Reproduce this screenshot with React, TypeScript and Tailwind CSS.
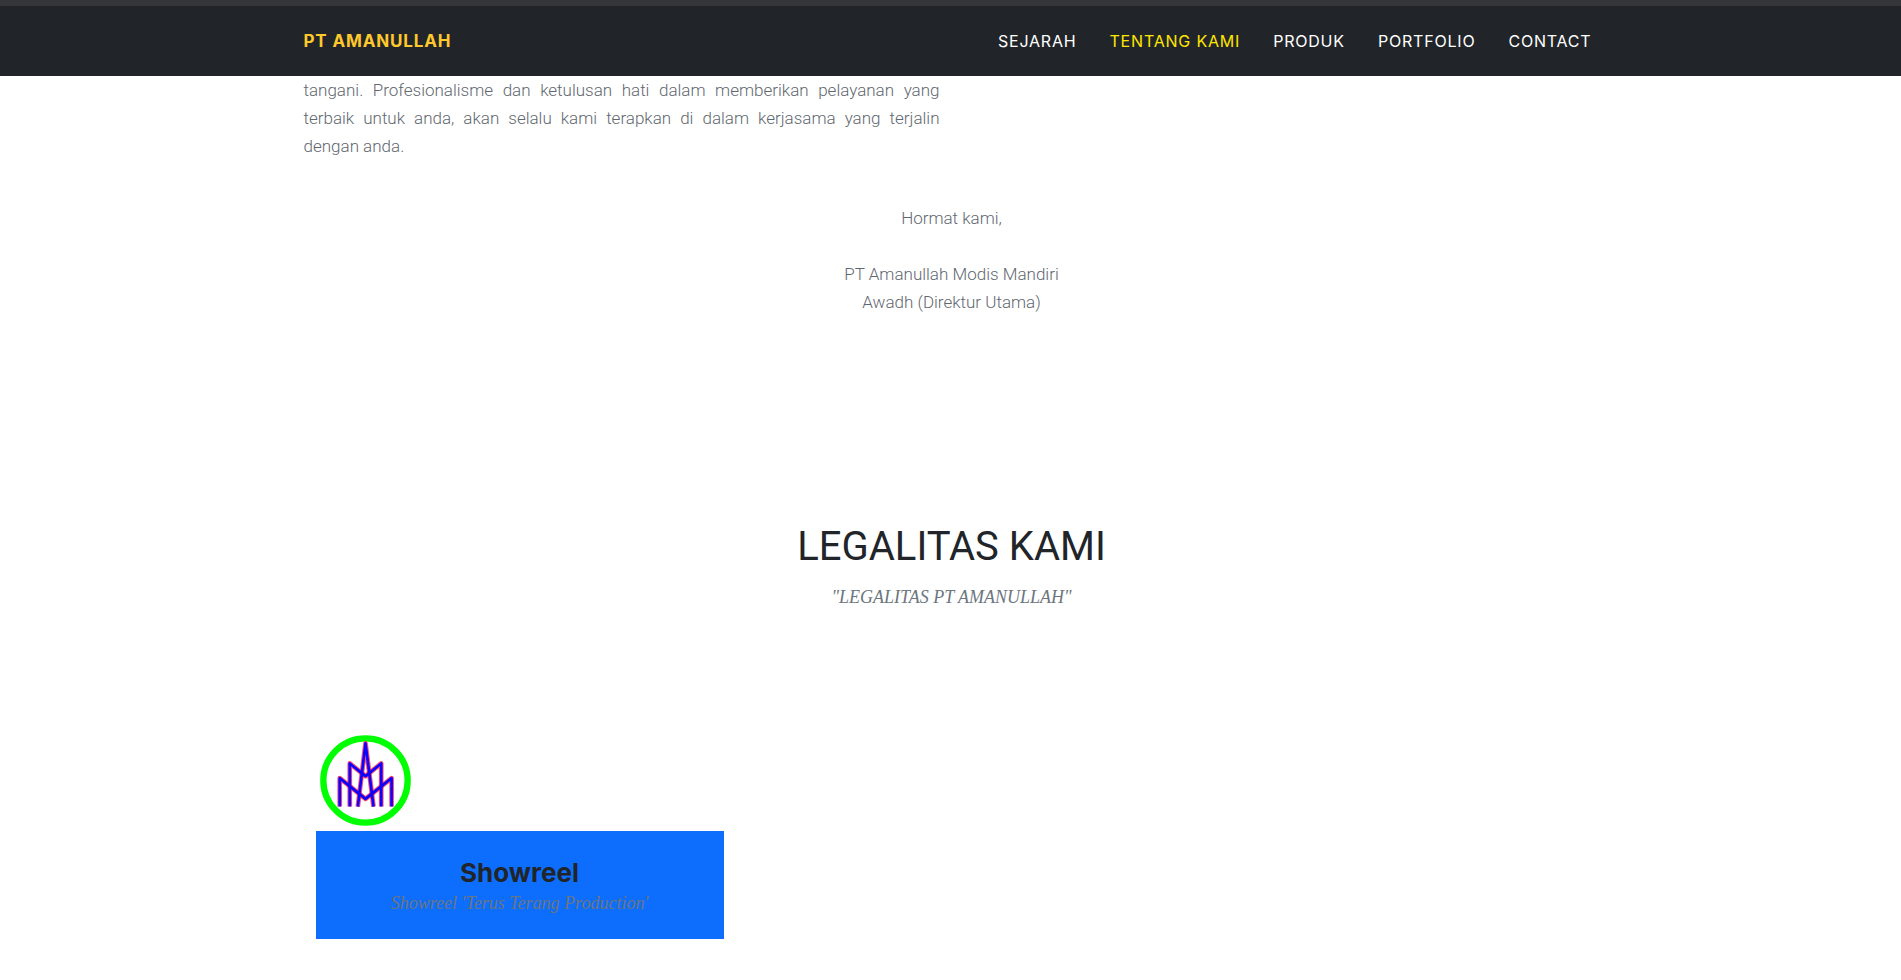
const links = [
  { label: "SEJARAH", href: "#sejarah", active: false },
  { label: "TENTANG KAMI", href: "#tentang", active: true },
  { label: "PRODUK", href: "#produk", active: false },
  { label: "PORTFOLIO", href: "#portfolio", active: false },
  { label: "CONTACT", href: "#contact", active: false },
];

const strokes = [
  "M90 247V162L167 224L245 162V247",
  "M120 247V118L167 156L214 118V247",
  "M144 247L167 58L191 247",
];

function Logo() {
  return (
    <svg viewBox="31 33 272 272" className="size-[91px]" role="img" aria-label="Logo PT Amanullah" fill="none">
      <circle cx="167" cy="169" r="126" stroke="#00ff00" strokeWidth="19" />
      {strokes.map((d) => (
        <path key={`edge-${d}`} d={d} stroke="#ff1040" strokeOpacity="0.75" strokeWidth="14" strokeLinejoin="round" />
      ))}
      {strokes.map((d) => (
        <path key={d} d={d} stroke="#0c00ff" strokeWidth="8" strokeLinejoin="round" />
      ))}
    </svg>
  );
}

function Header() {
  return (
    <header className="sticky top-0 border-t-6 border-[#35363a] bg-[#212529] pl-0.5">
      <div className="mx-auto flex h-[70px] max-w-[1320px] items-center justify-between px-3 font-['Inter',sans-serif]">
        <a href="#top" className="text-[17px] leading-6 font-bold tracking-wider text-[#ffc82c]">
          PT AMANULLAH
        </a>
        <nav aria-label="Utama" className="flex gap-[33px] px-2 text-base tracking-wider">
          {links.map((l) => (
            <a key={l.label} href={l.href} className={l.active ? "text-[#ffe600]" : "text-white"}>
              {l.label}
            </a>
          ))}
        </nav>
      </div>
    </header>
  );
}

export default function App() {
  return (
    <div className="min-h-screen bg-white font-['Roboto',sans-serif] text-[#212529]">
      <Header />
      <div className="pl-0.5">
        <main className="mx-auto max-w-[1320px] px-3">
          <section id="tentang" className="text-[17px] leading-7 font-light text-[#5f6870]">
            <p className="w-full lg:w-[636px]">
              <span className="block text-justify [text-align-last:justify]">
                tangani. Profesionalisme dan ketulusan hati dalam memberikan pelayanan yang
              </span>
              <span className="block text-justify [text-align-last:justify]">
                terbaik untuk anda, akan selalu kami terapkan di dalam kerjasama yang terjalin
              </span>
              <span className="block">dengan anda.</span>
            </p>
            <div className="pt-11 text-center">
              <p>Hormat kami,</p>
              <p className="pt-7">PT Amanullah Modis Mandiri</p>
              <p>Awadh (Direktur Utama)</p>
            </div>
          </section>
          <section id="legalitas" className="pt-[207px]">
            <div className="text-center">
              <h2 className="text-[40px] leading-12">LEGALITAS KAMI</h2>
              <p className="pt-3.5 font-['Liberation_Serif',serif] text-lg leading-6 text-[#6c757d] italic">
                "LEGALITAS PT AMANULLAH"
              </p>
            </div>
            <article className="mt-[126px] ml-3 w-full max-w-[408px]">
              <div className="px-1 pb-[5px]">
                <Logo />
              </div>
              <div className="bg-[#0d6efd] p-6 text-center">
                <h3 className="font-['Inter',sans-serif] text-[26px] leading-9 font-bold">Showreel</h3>
                <p className="font-['Liberation_Serif',serif] text-lg leading-6 text-[#6c757d] italic">
                  Showreel 'Terus Terang Production'
                </p>
              </div>
            </article>
          </section>
        </main>
      </div>
    </div>
  );
}
